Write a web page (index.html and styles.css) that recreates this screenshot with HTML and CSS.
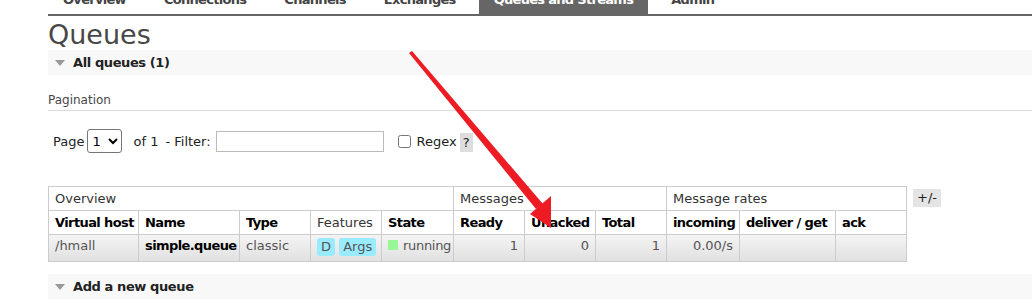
FILE: index.html
```html
<!DOCTYPE html>
<html lang="en">
<head>
  <meta charset="UTF-8" />
  <title>Queues - RabbitMQ Management</title>
  <link rel="stylesheet" href="styles.css">
</head>
<body>

  <nav class="tabs">
    <ul>
      <li>Overview</li>
      <li>Connections</li>
      <li>Channels</li>
      <li>Exchanges</li>
      <li class="active">Queues and Streams</li>
      <li>Admin</li>
    </ul>
  </nav>

  <main>
    <h1>Queues</h1>

    <div class="section-head"><span class="toggle"></span>All queues (1)</div>

    <div class="pagination-title">Pagination</div>

    <div class="pager">
      <span>Page</span>
      <select class="page-select"><option>1</option></select>
      <span class="of">of 1</span>
      <span>- Filter:</span>
      <input type="text" class="filter" />
      <input type="checkbox" class="regex-box" />
      <span>Regex</span>
      <span class="help">?</span>
    </div>

    <div class="table-wrap">
      <table class="list">
        <colgroup>
          <col style="width:90px"><col style="width:101px"><col style="width:71px">
          <col style="width:71px"><col style="width:72px"><col style="width:71px">
          <col style="width:71px"><col style="width:71px"><col style="width:73px">
          <col style="width:96px"><col style="width:71px">
        </colgroup>
        <thead>
          <tr class="group">
            <th colspan="5">Overview</th>
            <th colspan="3">Messages</th>
            <th colspan="3">Message rates</th>
          </tr>
          <tr>
            <th>Virtual host</th>
            <th>Name</th>
            <th>Type</th>
            <th class="plain">Features</th>
            <th>State</th>
            <th>Ready</th>
            <th>Unacked</th>
            <th>Total</th>
            <th>incoming</th>
            <th>deliver / get</th>
            <th>ack</th>
          </tr>
        </thead>
        <tbody>
          <tr>
            <td>/hmall</td>
            <td class="name">simple.queue</td>
            <td>classic</td>
            <td><span class="badge">D</span> <span class="badge">Args</span></td>
            <td class="state-cell"><span class="state"></span>running</td>
            <td class="num">1</td>
            <td class="num">0</td>
            <td class="num">1</td>
            <td class="num">0.00/s</td>
            <td></td>
            <td></td>
          </tr>
        </tbody>
      </table>
      <span class="toggle-cols">+/-</span>
    </div>

    <div class="section-head add"><span class="toggle"></span>Add a new queue</div>
  </main>

  <svg class="annotation" width="1032" height="303" viewBox="0 0 1032 303">
    <polygon points="409,53 412,51 543,204 536,209" fill="#ed1c24" />
    <polygon points="530,214 551,196 551,228" fill="#ed1c24" />
  </svg>

</body>
</html>
```

FILE: styles.css
```css
body {
  margin: 0;
  font-family: 'DejaVu Sans', Verdana, sans-serif;
  font-size: 13px;
  color: #484848;
  background: #fff;
  overflow: hidden;
}

/* Reiter oben */
.tabs {
  margin: -14px 0 0 48px;
  border-bottom: 2px solid #666;
}

.tabs ul {
  list-style: none;
  margin: 0;
  padding: 0;
  display: flex;
  gap: 8px;
}

.tabs li {
  padding: 6px 15px;
  line-height: 16px;
  font-weight: bold;
  letter-spacing: -0.7px;
  color: #444;
}

.tabs li.active {
  background: #666;
  color: #fff;
}

main {
  padding-left: 48px;
}

h1 {
  margin: 3px 0 0;
  font-size: 27px;
  line-height: 31px;
  font-weight: normal;
  color: #484848;
}

.section-head {
  background: #f8f8f8;
  height: 25px;
  display: flex;
  align-items: center;
  font-weight: bold;
  letter-spacing: -0.4px;
  color: #222;
}

.toggle {
  width: 0;
  height: 0;
  margin: 0 8px 0 7px;
  border-left: 5px solid transparent;
  border-right: 5px solid transparent;
  border-top: 6px solid #999;
}

.pagination-title {
  margin-top: 17px;
  font-size: 12px;
  line-height: 16px;
  padding-bottom: 2px;
  border-bottom: 1px solid #ddd;
}

.pager {
  display: flex;
  align-items: center;
  margin: 18px 0 0 5px;
  height: 24px;
  color: #222;
}

.page-select {
  margin: 0 11px 0 3px;
  height: 24px;
  width: 35px;
  font-family: inherit;
  font-size: 13px;
  border: 1px solid #767676;
  border-radius: 3px;
  background: #fff;
}

.of {
  margin-right: 7px;
}

.filter {
  margin-left: 5px;
  width: 162px;
  height: 17px;
  border: 1px solid #bbb;
  padding: 1px 2px;
}

.regex-box {
  margin: 0 6px 0 14px;
  width: 13px;
  height: 13px;
}

.help {
  margin-left: 3px;
  background: #ddd;
  padding: 0 3px;
  line-height: 19px;
  margin-top: 3px;
}

.table-wrap {
  display: flex;
  align-items: flex-start;
  margin-top: 33px;
}

table.list {
  border-collapse: collapse;
  table-layout: fixed;
  width: 858px;
}

table.list th,
table.list td {
  border: 1px solid #ccc;
  padding: 3px 6px;
  line-height: 17px;
  text-align: left;
  white-space: nowrap;
  overflow: hidden;
}

table.list th {
  color: #000;
  letter-spacing: -0.6px;
}

table.list tr.group th,
table.list th.plain {
  font-weight: normal;
  letter-spacing: 0;
  color: #333;
}

table.list tbody tr {
  background: linear-gradient(#f4f4f4, #e0e0e0);
}

table.list td {
  color: #555;
  padding: 1px 6px 5px;
  height: 19px;
  line-height: 19px;
  vertical-align: top;
}

table.list td.name {
  font-weight: bold;
  letter-spacing: -0.6px;
  color: #000;
}

table.list td.num {
  text-align: right;
}

table.list td.state-cell {
  letter-spacing: -0.3px;
}

.badge {
  display: inline-block;
  vertical-align: top;
  background: #99ebff;
  border-radius: 3px;
  padding: 0 4px;
  margin-top: 2px;
  line-height: 18px;
}

.state {
  display: inline-block;
  width: 10px;
  height: 10px;
  background: #98f898;
  margin-right: 5px;
}

.toggle-cols {
  margin: 3px 0 0 6px;
  background: #e4e4e4;
  padding: 0 4px;
  line-height: 18px;
  color: #222;
}

.section-head.add {
  margin-top: 12px;
}

/* Markierungspfeil */
.annotation {
  position: absolute;
  top: 0;
  left: 0;
  pointer-events: none;
}
```
